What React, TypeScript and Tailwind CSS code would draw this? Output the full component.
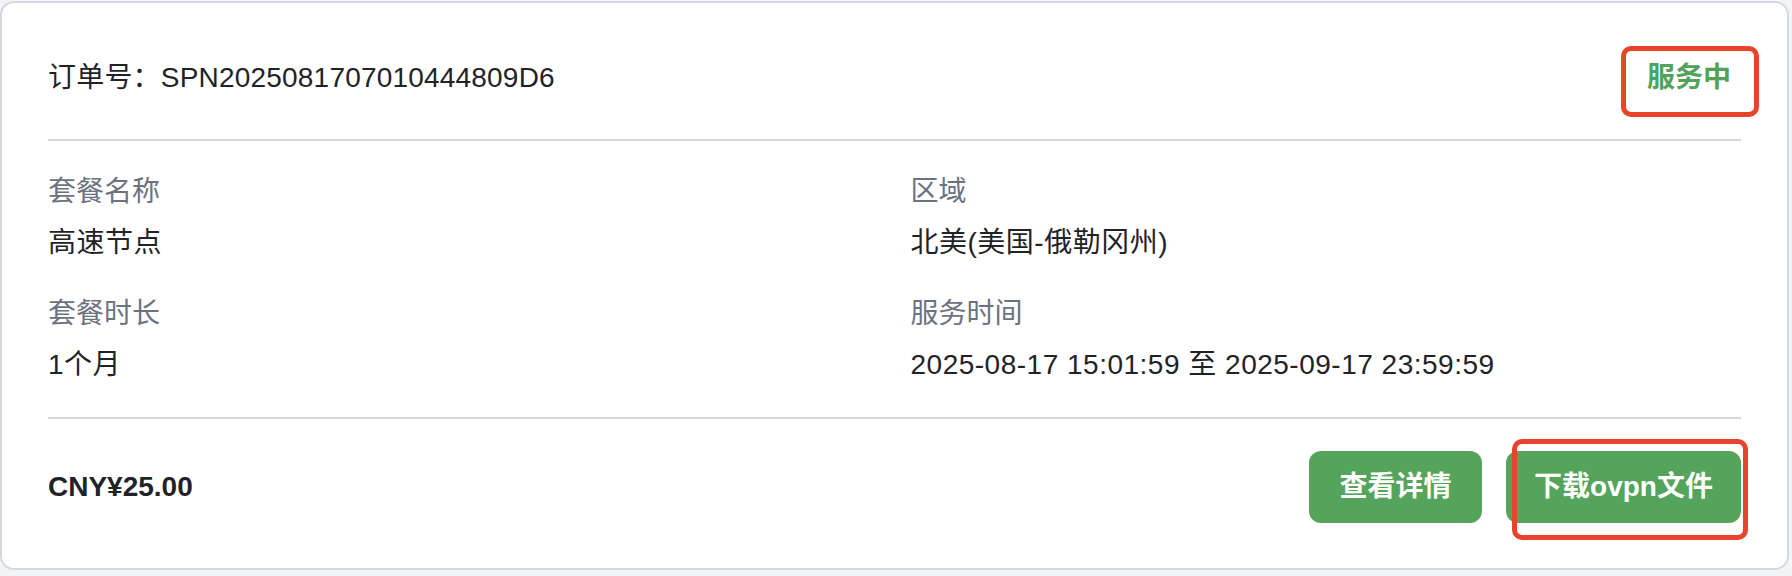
import React from "react";

const rows = [
  [
    { label: "套餐名称", value: "高速节点" },
    { label: "区域", value: "北美(美国-俄勒冈州)" },
  ],
  [
    { label: "套餐时长", value: "1个月" },
    { label: "服务时间", value: "2025-08-17 15:01:59 至 2025-09-17 23:59:59" },
  ],
];

export default function App() {
  return (
    <div
      className="min-h-screen bg-[#f3f4f6] pt-px text-[28px] text-[#1f2328]"
      style={{ fontFamily: '"Liberation Sans", "Noto Sans CJK SC", sans-serif' }}
    >
      <div className="w-[1789px] h-[569px] rounded-[14px] border-2 border-[#d5d9de] bg-white px-[46px] flex flex-col">
        {/* header */}
        <div className="flex items-center justify-between pt-[55px] pb-[41px]">
          <span className="leading-[40px] tracking-[0.2px]">订单号：SPN2025081707010444809D6</span>
          <span className="relative leading-[40px] font-bold text-[#52a25a] mr-[10px]">
            服务中
            <span className="absolute -left-[26px] -right-[28px] -top-[12px] -bottom-[19px] rounded-[10px] border-[5px] border-[#e8442b]" />
          </span>
        </div>
        <div className="h-[2px] bg-[#d5d9de]" />

        {/* details */}
        <div className="flex flex-col gap-y-[29px] pt-[30px] pb-[31px]">
          {rows.map((row, i) => (
            <div key={i} className="grid grid-cols-2 gap-x-8">
              {row.map((item) => (
                <div key={item.label} className="flex flex-col">
                  <span className="leading-[42px] text-[#6b7280]">{item.label}</span>
                  <span className="leading-[42px] mt-[9px] tracking-[0.5px]">{item.value}</span>
                </div>
              ))}
            </div>
          ))}
        </div>
        <div className="h-[2px] bg-[#d5d9de]" />

        {/* footer */}
        <div className="flex items-center justify-between pt-[32px]">
          <span className="font-bold">CNY¥25.00</span>
          <div className="flex gap-6">
            <button className="h-[72px] w-[173px] rounded-[12px] bg-[#55a45b] text-white font-bold flex items-center justify-center">
              查看详情
            </button>
            <div className="relative">
              <button className="h-[72px] w-[235px] rounded-[12px] bg-[#55a45b] text-white font-bold flex items-center justify-center">
                下载ovpn文件
              </button>
              <span className="absolute left-[6px] -right-[7px] -top-[12px] -bottom-[17px] rounded-[10px] border-[5px] border-[#e8442b]" />
            </div>
          </div>
        </div>
      </div>
    </div>
  );
}
